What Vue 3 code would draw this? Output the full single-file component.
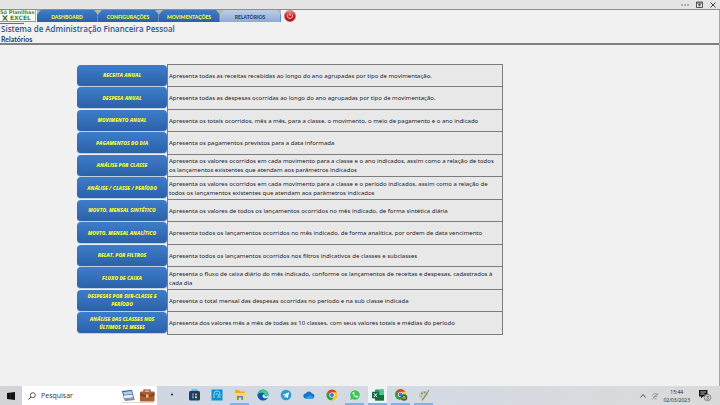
<script setup>
import { ref } from 'vue';

const tabs = ['DASHBOARD', 'CONFIGURAÇÕES', 'MOVIMENTAÇÕES', 'RELATÓRIOS'];
const activeTab = ref('RELATÓRIOS');
const search = ref('');

const reports = [
  { name: 'RECEITA ANUAL', text: 'Apresenta todas as receitas recebidas ao longo do ano agrupadas por tipo de movimentação.' },
  { name: 'DESPESA ANUAL', text: 'Apresenta todas as despesas ocorridas ao longo do ano agrupadas por tipo de movimentação.' },
  { name: 'MOVIMENTO ANUAL', text: 'Apresenta os totais ocorridos, mês a mês, para a classe, o movimento, o meio de pagamento e o ano indicado' },
  { name: 'PAGAMENTOS DO DIA', text: 'Apresenta os pagamentos previstos para a data informada' },
  { name: 'ANÁLISE POR CLASSE', text: 'Apresenta os valores ocorridos em cada movimento para a classe e o ano indicados, assim como a relação de todos\nos lançamentos existentes que atendam aos parâmetros indicados' },
  { name: 'ANÁLISE / CLASSE / PERÍODO', text: 'Apresenta os valores ocorridos em cada movimento para a classe e o período indicados, assim como a relação de\ntodos os lançamentos existentes que atendam aos parâmetros indicados' },
  { name: 'MOVTO. MENSAL SINTÉTICO', text: 'Apresenta os valores de todos os lançamentos ocorridos no mês indicado, de forma sintética diária' },
  { name: 'MOVTO. MENSAL ANALÍTICO', text: 'Apresenta todos os lançamentos ocorridos no mês indicado, de forma analítica, por ordem de data vencimento' },
  { name: 'RELAT. POR FILTROS', text: 'Apresenta todos os lançamentos ocorridos nos filtros indicativos de classes e subclasses' },
  { name: 'FLUXO DE CAIXA', text: 'Apresenta o fluxo de caixa diário do mês indicado, conforme os lançamentos de receitas e despesas, cadastrados à\ncada dia' },
  { name: 'DESPESAS POR SUB-CLASSE E\nPERÍODO', text: 'Apresenta o total mensal das despesas ocorridas no período e na sub classe indicada' },
  { name: 'ANÁLISE DAS CLASSES NOS\nÚLTIMOS 12 MESES', text: 'Apresenta dos valores mês a mês de todas as 10 classes, com seus valores totais e médias do período' }
];
</script>

<template>
  <div class="desktop">
    <div class="titlebar">
      <button class="win-btn" aria-label="Mais opções">
        <svg width="8" height="8" viewBox="0 0 8 8"><path d="M0 4h2M3 4h2M6 4h2" stroke="#777" /></svg>
      </button>
      <button class="win-btn" aria-label="Opções da faixa">
        <svg width="7" height="7" viewBox="0 0 7 7"><path d="M.5 1h6v5.500h-6zM.5 2h6M3.500 5.500v-2.500M2 4.300l1.500-1.300 1.500 1.300" fill="none" stroke="#444" stroke-width=".9" /></svg>
      </button>
      <button class="win-btn" aria-label="Fechar">
        <svg width="6" height="6" viewBox="0 0 6 6"><path d="M.5.5l5 5M5.500.5l-5 5" stroke="#333" stroke-width=".9" /></svg>
      </button>
    </div>

    <main class="sheet">
      <header class="top">
        <div class="nav-row">
          <a href="#" class="logo">
            <span class="logo-line">Só Planilhas</span>
            <span class="logo-line logo-excel"><svg width="6" height="6" viewBox="0 0 6 6"><path d="M0 .5h2l1 1.500 1.200-1.500H6L4 3l2 2.500H4L3 4 1.800 5.500H0L2 3z" fill="#3c7a3c" /></svg>EXCEL</span>
          </a>
          <nav class="tabs">
            <button
              v-for="tab in tabs"
              :key="tab"
              class="tab"
              :class="{ active: tab === activeTab }"
              @click="activeTab = tab"
            >{{ tab }}</button>
          </nav>
          <button class="power" aria-label="Sair">
            <svg width="12" height="12" viewBox="0 0 12 12">
              <defs>
                <linearGradient id="red" x1="0" y1="0" x2="0" y2="1">
                  <stop offset="0" stop-color="#e6a0a0" />
                  <stop offset=".45" stop-color="#c9252b" />
                  <stop offset="1" stop-color="#a8141b" />
                </linearGradient>
              </defs>
              <circle cx="6" cy="6" r="5.700" fill="url(#red)" stroke="#b98080" stroke-width=".5" />
              <path d="M4 4.500a2.500 2.500 0 1 0 4 0M6 3v3" fill="none" stroke="#f7dada" stroke-width=".9" />
            </svg>
          </button>
        </div>
        <div class="cell-mark"></div>
        <h1>Sistema de Administração Financeira Pessoal</h1>
        <h2>Relatórios</h2>
      </header>

      <table class="reports">
        <tbody>
          <tr v-for="report in reports" :key="report.name">
            <th scope="row"><button class="report-btn">{{ report.name }}</button></th>
            <td>{{ report.text }}</td>
          </tr>
        </tbody>
      </table>
    </main>

    <footer class="taskbar">
      <button class="start" aria-label="Iniciar">
        <svg width="8" height="8" viewBox="0 0 8 8"><path d="M0 1l3.900-.5v3.400H0zM4 .5L8 0v3.900H4zM0 4h3.900v3.500L0 7zM4 4h4v4l-4-.5z" fill="#111" /></svg>
      </button>
      <label class="search">
        <svg width="8" height="8" viewBox="0 0 8 8"><circle cx="4.800" cy="3.200" r="2.500" fill="none" stroke="#333" stroke-width=".8" /><path d="M3 5L.5 7.500" stroke="#333" stroke-width=".9" /></svg>
        <input v-model="search" type="text" placeholder="Pesquisar" aria-label="Pesquisar" />
        <svg width="34" height="15" viewBox="0 0 34 15">
          <path d="M1 3l10-1 2 8-10 1z" fill="#35517c" />
          <path d="M2 4l8.500-1 1 3-8.500 1z" fill="#a9cdec" />
          <path d="M2.500 7.500l9-1 .7 3-9 1z" fill="#e3edf7" />
          <path d="M3 11l10-1 1 2-10 1z" fill="#7b8ea8" />
          <path d="M23 4V2h6v2" fill="none" stroke="#6d3c22" stroke-width="1.200" />
          <rect x="19" y="3.500" width="14.500" height="10" rx="1" fill="#aa5d34" />
          <path d="M19 4.500q7 5 14.500 0v3q-7 3-14.500 0z" fill="#85431f" />
          <rect x="25" y="6.500" width="2.500" height="3" fill="#f0c46a" />
          <path d="M1 14.500h32" stroke="#e8d5c0" />
        </svg>
      </label>
      <div class="apps">
        <button class="app" aria-label="Visão de tarefas">
          <svg width="14" height="14" viewBox="0 0 14 14"><circle cx="8" cy="6.500" r="1" fill="#222" /></svg>
        </button>
        <button class="app" aria-label="Loja">
          <svg width="14" height="14" viewBox="0 0 14 14"><path d="M5 4V2h5v2" fill="none" stroke="#2c9ad6" /><rect x="2" y="3" width="11" height="9.500" rx="1.500" fill="#17406f" /><path d="M5 5.500h2v2H5z" fill="#e9643c" /><path d="M8 5.500h2v2H8z" fill="#8cc63f" /><path d="M5 8.300h2v2H5z" fill="#35a7e8" /><path d="M8 8.300h2v2H8z" fill="#f7c331" /></svg>
        </button>
        <button class="app" aria-label="Assistente">
          <svg width="14" height="14" viewBox="0 0 14 14"><rect x="1.500" y="1.500" width="11" height="11" fill="#0d93cf" /><path d="M4 10V6a3 3 0 0 1 6 0v4M6 7a1.300 1.300 0 1 1 2 1v2" fill="none" stroke="#9edcf5" stroke-width=".9" /></svg>
        </button>
        <button class="app open" aria-label="Explorador de Arquivos">
          <svg width="14" height="14" viewBox="0 0 14 14"><path d="M2 2h4l1 1.500h5V11H2z" fill="#e9ad2d" /><path d="M2 5h10v6H2z" fill="#fbd768" /><path d="M4 12V8h6v4H8.500V9.500h-3V12z" fill="#3a8bd0" /></svg>
        </button>
        <button class="app" aria-label="Edge">
          <svg width="14" height="14" viewBox="0 0 14 14"><circle cx="7" cy="7" r="5.500" fill="#1573c4" /><path d="M1.500 7C2 .5 12.500.5 12.500 6.500c0 3-4 3-4 1.500C9.500 4 4 3.500 1.500 7z" fill="#43c98f" /><path d="M1.500 7C3 4 8 4 8.500 6.500 6 6 5 9 8 10.500c1.500.7 3 .3 4-.8-2 3.500-9.500 4-10.500-2.700z" fill="#135ba8" /><path d="M6.500 7.500C7 6 9 6 8.600 8c0 1.300 3 1 3.900-1 0 2-1 3.300-3 3.300s-3-1.300-3-2.800z" fill="#e4f2f5" /></svg>
        </button>
        <button class="app" aria-label="Telegram">
          <svg width="14" height="14" viewBox="0 0 14 14"><circle cx="7" cy="7" r="5.300" fill="#2b9bd7" /><path d="M3.500 7l6.500-2.800-1.200 6-2-1.400-1.200 1V8L8.500 5.500 5 7.600z" fill="#fff" /></svg>
        </button>
        <button class="app" aria-label="OneDrive">
          <svg width="14" height="14" viewBox="0 0 14 14"><path d="M4 10.500a2.500 2.500 0 0 1-.3-5A3.500 3.500 0 0 1 10 5.500a2.600 2.600 0 0 1 .8 5z" fill="#1474ca" /><path d="M3 10.300l5-3.500 4 3q-.5.700-1.200.7H4z" fill="#2a9aea" /></svg>
        </button>
        <button class="app" aria-label="Chrome">
          <svg width="14" height="14" viewBox="0 0 14 14"><circle cx="7" cy="7" r="5.500" fill="#fac42a" /><path d="M7 7L2.200 4.300A5.500 5.500 0 0 1 11.800 4.300H7z" fill="#dd4032" /><path d="M7 7L2.200 4.300A5.500 5.500 0 0 0 6.500 12.500L9 8.500z" fill="#2c9e4b" /><circle cx="7" cy="7" r="2.600" fill="#fff" /><circle cx="7" cy="7" r="2" fill="#3b78e0" /></svg>
        </button>
        <button class="app open" aria-label="WhatsApp">
          <svg width="14" height="14" viewBox="0 0 14 14"><path d="M1.500 12.500l.8-3A5.300 5.300 0 1 1 4.500 11.700z" fill="#3fc35a" stroke="#eef8ef" stroke-width=".7" /><path d="M5 4c-1.500 1 1.500 5.800 4.300 5.500 1-.3.900-1.300.5-1.500L8.600 7.500l-.7.700Q6.500 7.500 6 6.200l.6-.7L6 4z" fill="#fff" /></svg>
        </button>
        <button class="app open current" aria-label="Excel">
          <svg width="14" height="14" viewBox="0 0 14 14"><rect x="4" y="1.500" width="9" height="11" rx="1" fill="#2f9d65" /><path d="M8.500 1.500H13V7H8.500z" fill="#4fc68a" /><path d="M4 7h9v5.500H4z" fill="#196b40" /><rect x="1" y="3.800" width="6.800" height="6.800" rx=".8" fill="#0f6b3a" /><path d="M3 5.300l3 3.800M6 5.300L3 9.100" stroke="#fff" /></svg>
        </button>
        <button class="app open" aria-label="Chrome, perfil">
          <svg width="14" height="14" viewBox="0 0 14 14"><circle cx="6.500" cy="6.500" r="5.500" fill="#fac42a" /><path d="M6.500 6.500L1.700 3.800A5.500 5.500 0 0 1 11.300 3.800H6.500z" fill="#dd4032" /><path d="M6.500 6.500L1.700 3.800A5.500 5.500 0 0 0 6 12l2.500-4z" fill="#2c9e4b" /><circle cx="6.500" cy="6.500" r="2.600" fill="#fff" /><circle cx="6.500" cy="6.500" r="2" fill="#3b78e0" /><circle cx="10" cy="9.500" r="3.300" fill="#3d6b2c" /><path d="M9 11V9q1-1.500 2 0v2" fill="none" stroke="#dce8d2" stroke-width=".7" /></svg>
        </button>
        <button class="app open" aria-label="Paint">
          <svg width="14" height="14" viewBox="0 0 14 14"><path d="M2.500 7c0-4 8-5 8-1 0 2-2.500 1-2.500 3s-5.500 3-5.500-2z" fill="#bfd5df" stroke="#92a9b4" stroke-width=".5" /><circle cx="5" cy="5.500" r=".9" fill="#d9604b" /><circle cx="7.500" cy="4.500" r=".9" fill="#58a858" /><circle cx="4.500" cy="8" r=".9" fill="#e2b93d" /><path d="M12 2L6.500 10.500l-1.500 2" stroke="#af8044" stroke-width="1.100" /></svg>
        </button>
      </div>
      <div class="tray">
        <svg width="8" height="8" viewBox="0 0 8 8"><path d="M1.500 5.500L4 2.500l2.500 3" fill="none" stroke="#444" stroke-width=".9" /></svg>
        <svg width="8" height="8" viewBox="0 0 8 8"><path d="M1 3.500Q4 0 7 3M2 5.500q2-2.500 4-.8M3.500 7q1-1 2 0M1 7.500l6-6" fill="none" stroke="#777" stroke-width=".7" /></svg>
        <div class="clock">
          <span>15:44</span>
          <span>02/03/2023</span>
        </div>
        <button class="notify" aria-label="Notificações">
          <svg width="14" height="13" viewBox="0 0 14 13"><path d="M1 1h8.500v6.500H5L3 9.500v-2H1z" fill="#1c1c1c" /><path d="M2.500 3h5.500M2.500 5h4" stroke="#ddd" stroke-width=".8" /><circle cx="9.500" cy="8.500" r="3.300" fill="#d0d0d0" stroke="#555" stroke-width=".6" /><path d="M8.500 7.300h2L9.700 8.400q1.500.7 0 1.800H8.500" fill="none" stroke="#333" stroke-width=".6" /></svg>
        </button>
      </div>
    </footer>
  </div>
</template>

<style>
body {
  margin: 0;
  background: #f1f1f1;
}
</style>

<style scoped>
.desktop {
  display: flex;
  flex-direction: column;
  min-height: 100vh;
  font-family: "Open Sans", "Noto Sans", sans-serif;
  color: #222;
}

button {
  border: none;
  padding: 0;
  background: none;
  font-family: inherit;
  cursor: pointer;
}

svg {
  display: block;
}

.titlebar {
  display: flex;
  justify-content: flex-end;
  align-items: center;
  gap: 7px;
  height: 9px;
  padding-right: 4px;
  background: #e5e5e5;
  border-bottom: 1px solid #8c8c8c;
}

.sheet {
  flex: 1;
  background: #f1f1f1;
  border-right: 1px solid #a5a5a5;
}

.top {
  height: 33px;
  border-bottom: 2px solid #808080;
}

.nav-row {
  display: flex;
  height: 12px;
}

.logo {
  display: flex;
  flex-direction: column;
  width: 35px;
  height: 11px;
  overflow: hidden;
  background: #fafcf8;
  border-right: 1px solid #9fbd9a;
  border-bottom: 1px solid #7fa07a;
  color: #4a8a42;
  font-family: "DejaVu Sans", sans-serif;
  font-size: 5px;
  font-weight: 700;
  line-height: 5px;
  text-decoration: none;
  white-space: nowrap;
}

.logo-excel {
  display: flex;
  gap: 2px;
  padding-left: 2px;
  font-size: 6px;
  line-height: 6px;
}

.tabs {
  display: flex;
  margin-left: 1px;
  background: #b5b5b5;
}

.tab {
  width: 61px;
  padding-top: 1px;
  background: linear-gradient(#3f7cc4, #2a62a8);
  clip-path: polygon(0 100%, 0 35%, 4px 0, 57px 0, 100% 40%, 100% 100%);
  border-right: 1px solid #5f8ec9;
  color: #f4f83a;
  font-family: "Lato", sans-serif;
  font-size: 5px;
  font-weight: 900;
}

.tab.active {
  background: linear-gradient(#bccfe9, #8fabd2);
  color: #26446f;
}

.power {
  margin-left: 3px;
}

.cell-mark {
  width: 24px;
  height: 1px;
  margin-top: 1px;
  background: #4f7f63;
}

h1,
h2 {
  margin: 0;
  padding-left: 1px;
  color: #2f5597;
  line-height: 10px;
}

h1 {
  font-size: 8px;
  font-weight: 600;
}

h2 {
  color: #1f3f73;
  font-family: "Lato", sans-serif;
  font-size: 7px;
  font-weight: 700;
}

.reports {
  width: calc(60% - 5px);
  margin: 19px 0 0 77px;
  border-collapse: collapse;
}

.reports tr {
  height: 22px;
}

.reports tr:nth-child(even) {
  height: 23px;
}

.reports th {
  width: 90px;
  padding: 0;
}

.reports td {
  padding: 1px 1px 0;
  border: 1px solid #7d7d7d;
  background: #e8e8e8;
  color: #1c1c28;
  font-family: "Noto Sans", sans-serif;
  font-size: 6px;
  line-height: 9px;
  white-space: pre;
}

.report-btn {
  display: block;
  width: 100%;
  height: 22px;
  border-radius: 4px;
  background: linear-gradient(#3e7cc9, #2b62a9);
  border-bottom: 1px solid #c4cfde;
  color: #f2f832;
  font-size: 5px;
  font-style: italic;
  font-weight: 800;
  line-height: 8px;
  white-space: pre;
}

.taskbar {
  display: flex;
  align-items: stretch;
  height: 19px;
  background: linear-gradient(90deg, #d4d4d6, #d0d8e4 30%, #d5dbe4 60%, #dadada);
}

.start {
  display: flex;
  align-items: center;
  justify-content: center;
  width: 22px;
}

.search {
  display: flex;
  align-items: center;
  gap: 5px;
  width: 129px;
  padding-left: 6px;
  background: #fff;
}

.search input {
  width: 75px;
  padding: 0;
  border: none;
  outline: none;
  background: none;
  font-family: "Open Sans", sans-serif;
  font-size: 7px;
}

.search input::placeholder {
  color: #333;
}

.apps {
  display: flex;
  margin-left: 2px;
}

.app {
  display: flex;
  justify-content: center;
  align-items: center;
  width: 19px;
  margin: 0 2px;
  border-bottom: 2px solid transparent;
}

.app.open {
  border-bottom-color: #7db2ea;
}

.app.current {
  background: #eef2f6;
}

.tray {
  display: flex;
  align-items: center;
  gap: 4px;
  margin-left: auto;
  padding-right: 8px;
}

.clock {
  display: flex;
  flex-direction: column;
  align-items: center;
  font-size: 5px;
  line-height: 8px;
}

.notify {
  margin-left: 4px;
}
</style>
